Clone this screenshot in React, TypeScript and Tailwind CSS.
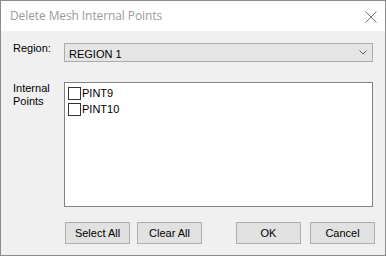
import React from "react";

const points = ["PINT9", "PINT10"];

const Btn: React.FC<{ label: string; className?: string }> = ({ label, className = "" }) => (
  <button
    className={`h-[22px] w-[65px] border border-[#adadad] bg-[#e1e1e1] text-[11px] leading-[13px] text-black ${className}`}
  >
    {label}
  </button>
);

export default function App() {
  return (
    <div
      className="w-[386px] h-[256px] border border-[#8c8c8c] flex flex-col bg-white"
      style={{ fontFamily: '"Liberation Sans", Arial, sans-serif' }}
    >
      <div className="h-[30px] bg-white flex items-center justify-between pl-[9px] pr-[8px]">
        <span
          className="text-[12px] text-[#9a9a9a] tracking-[-0.1px]"
          style={{ fontFamily: '"Open Sans", "Noto Sans", sans-serif' }}
        >
          Delete Mesh Internal Points
        </span>
        <svg width="12" height="12" viewBox="0 0 12 12" className="mt-[1px]">
          <path d="M0.5 0.5 L11.5 11.5 M11.5 0.5 L0.5 11.5" stroke="#707070" strokeWidth="1" fill="none" />
        </svg>
      </div>

      <div className="flex-1 bg-[#f0f0f0] pt-[12px] flex flex-col text-[11px] leading-[13px] text-black">
        <div className="flex items-start">
          <div className="w-[63px] pl-[12px] -mt-[1px]">Region:</div>
          <div className="w-[309px] h-[19px] border border-[#acacac] bg-[#e5e5e5] flex items-center justify-between pl-[4px] pr-[5px]">
            <span className="pt-[3px]">REGION 1</span>
            <svg width="8" height="5" viewBox="0 0 8 5">
              <path d="M0.5 0.5 L4 4 L7.5 0.5" stroke="#606060" strokeWidth="1" fill="none" />
            </svg>
          </div>
        </div>

        <div className="flex items-start mt-[20px]">
          <div className="w-[63px] pl-[12px]">
            Internal
            <br />
            Points
          </div>
          <div className="w-[309px] h-[125px] border border-[#828282] bg-white pl-[3px] pt-[2px] flex flex-col">
            {points.map((p) => (
              <div key={p} className="flex items-center h-[16px]">
                <span className="w-[13px] h-[13px] border border-[#333333] bg-white" />
                <span className="ml-[1px]">{p}</span>
              </div>
            ))}
          </div>
        </div>

        <div className="flex mt-[15px] pl-[64px]">
          <Btn label="Select All" />
          <Btn label="Clear All" className="ml-[7px]" />
          <Btn label="OK" className="ml-[34px]" />
          <Btn label="Cancel" className="ml-[9px]" />
        </div>
      </div>
    </div>
  );
}
